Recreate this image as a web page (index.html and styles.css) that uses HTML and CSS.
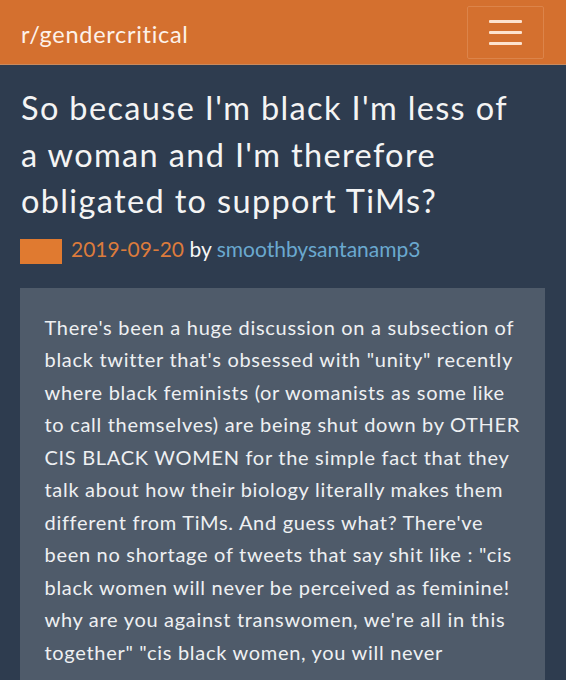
FILE: index.html
```html
<!DOCTYPE html>
<html>
<head>
<meta charset="utf-8">
<link rel="stylesheet" href="styles.css">
</head>
<body>
<header class="navbar">
  <div class="brand">r/gendercritical</div>
  <button class="toggler" aria-label="menu">
    <span class="bar"></span><span class="bar"></span><span class="bar"></span>
  </button>
</header>
<main class="post">
  <h1 class="title">So because I'm black I'm less of a woman and I'm therefore obligated to support TiMs?</h1>
  <div class="meta"><span class="flair"></span><span class="date">2019-09-20</span> <span class="by">by</span> <span class="author">smoothbysantanamp3</span></div>
  <div class="body">There's been a huge discussion on a subsection of black twitter that's obsessed with "unity" recently where black feminists (or womanists as some like to call themselves) are being shut down by OTHER CIS BLACK WOMEN for the simple fact that they talk about how their biology literally makes them different from TiMs. And guess what? There've been no shortage of tweets that say shit like : "cis black women will never be perceived as feminine! why are you against transwomen, we're all in this together" "cis black women, you will never</div>
</main>
</body>
</html>
```
FILE: styles.css
```css
html, body {
  margin: 0;
  padding: 0;
  background: #2e3c4f;
  font-family: Lato, "Open Sans", sans-serif;
  overflow: hidden;
  height: 680px;
}
.navbar {
  display: flex;
  align-items: center;
  justify-content: space-between;
  height: 64px;
  background: #d4702f;
  border-bottom: 1px solid #c98a5e;
  padding: 0 22px 0 21px;
}
.brand {
  color: #fdf2ea;
  font-size: 23.5px;
  letter-spacing: 0.7px;
  padding-top: 4px;
}
.toggler {
  width: 77px;
  height: 53px;
  background: transparent;
  border: 1px solid #dc844a;
  border-radius: 2px;
  display: flex;
  flex-direction: column;
  align-items: center;
  justify-content: center;
  gap: 8.3px;
  padding: 0;
  margin-top: 1px;
}
.toggler .bar {
  display: block;
  width: 33px;
  height: 2.5px;
  border-radius: 1px;
  background: #fde3cf;
}
.post {
  padding: 20px 21px 0 21px;
}
.title {
  margin: 0;
  max-width: 500px;
  color: #f4f4f4;
  font-weight: 400;
  font-size: 32.5px;
  letter-spacing: 1.35px;
  line-height: 46.5px;
}
.meta {
  font-size: 21px;
  line-height: 25px;
  margin-top: 11px;
  margin-left: -1px;
  color: #ffffff;
}
.flair {
  display: inline-block;
  width: 42px;
  height: 25px;
  background: #e07a30;
  margin-right: 9px;
  vertical-align: -7px;
}
.date { color: #dc7b3c; }
.by { color: #f7f7f7; }
.author { color: #6aa9cf; }
.body {
  margin-top: 24px;
  margin-left: -1px;
  background: #4f5b6a;
  color: #eef0f2;
  font-size: 20px;
  letter-spacing: 0.7px;
  line-height: 32.5px;
  padding: 23px 19.5px 60px 24.5px;
}
```
